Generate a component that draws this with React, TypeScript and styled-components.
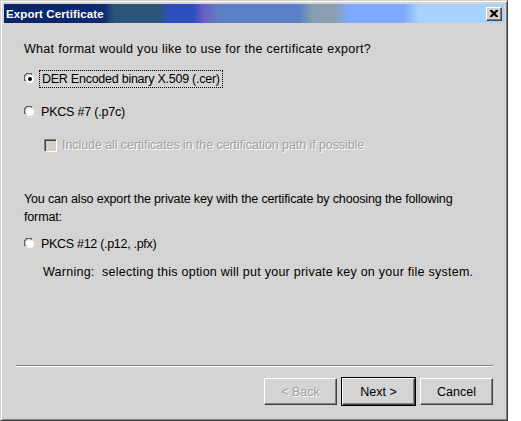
import React from "react";
import styled, { createGlobalStyle } from "styled-components";

const GlobalStyle = createGlobalStyle`
  html, body {
    margin: 0;
    padding: 0;
    background: #ffffff;
  }
  body {
    font-family: "Liberation Sans", Arial, sans-serif;
    font-size: 12.5px;
    color: #000;
  }
`;

const RadioIcon = ({ checked }: { checked?: boolean }) => (
  <svg width="12" height="12" viewBox="0 0 12 12">
    <path d="M0.5 8 A5.5 5.5 0 0 1 8 0.5" fill="none" stroke="#808080" />
    <path d="M1.5 8 A4.5 4.5 0 0 1 8 1.5" fill="none" stroke="#404040" />
    <circle cx="6" cy="6" r="4" fill="#fff" />
    <path d="M4 11.5 A5.5 5.5 0 0 0 11.5 4" fill="none" stroke="#fff" />
    <path d="M4 10.5 A4.5 4.5 0 0 0 10.5 4" fill="none" stroke="#d4d0c8" />
    {checked && <circle cx="6" cy="6" r="2" fill="#000" />}
  </svg>
);

const App = () => {
  return (
    <>
      <GlobalStyle />
      <Window>
        <TitleBar>
          <Title>Export Certificate</Title>
          <CloseButton>
            <svg width="8" height="7" viewBox="0 0 8 7">
              <path
                d="M0 0h2l2 2 2-2h2v1l-2.5 2.5L8 6v1H6L4 5 2 7H0V6l2.5-2.5L0 1z"
                fill="#000"
              />
            </svg>
          </CloseButton>
        </TitleBar>
        <Body>
          <Label $spacing={0.3}>What format would you like to use for the certificate export?</Label>
          <Option $top={14} $spacing={-0.25}>
            <RadioIcon checked />
            <Focused>DER Encoded binary X.509 (.cer)</Focused>
          </Option>
          <Option $top={15} $spacing={-0.2}>
            <RadioIcon />
            <span>PKCS #7 (.p7c)</span>
          </Option>
          <CheckRow>
            <CheckBox />
            <Disabled>Include all certificates in the certification path if possible</Disabled>
          </CheckRow>
          <Paragraph>
            You can also export the private key with the certificate by choosing the following
            <br />
            format:
          </Paragraph>
          <Option $top={9} $spacing={-0.3}>
            <RadioIcon />
            <span>PKCS #12 (.p12, .pfx)</span>
          </Option>
          <Warning>Warning:&nbsp; selecting this option will put your private key on your file system.</Warning>
        </Body>
        <Footer>
          <Separator />
          <ButtonRow>
            <Button disabled>
              <Disabled>&lt; Back</Disabled>
            </Button>
            <Button $default>Next &gt;</Button>
            <Button>Cancel</Button>
          </ButtonRow>
        </Footer>
      </Window>
    </>
  );
};

const Window = styled.div`
  box-sizing: border-box;
  width: 508px;
  height: 421px;
  display: flex;
  flex-direction: column;
  background: #d4d4d4;
  border-top: 1px solid #d4d0c8;
  border-left: 1px solid #d4d0c8;
  border-right: 1px solid #404040;
  border-bottom: 1px solid #404040;
  box-shadow: inset 1px 1px 0 #fff, inset -1px -1px 0 #808080;
  padding: 3px;
`;

const TitleBar = styled.div`
  height: 19px;
  display: flex;
  align-items: center;
  justify-content: space-between;
  padding: 0 2px;
  background: linear-gradient(
    to right,
    #0a246a 0px,
    #0c2a6e 100px,
    #2b5478 110px,
    #2b5478 155px,
    #2d4fc0 165px,
    #2d4fc0 190px,
    #6b5fc0 200px,
    #5b80c5 215px,
    #5b80c5 295px,
    #8aa0b0 310px,
    #8aa0b0 330px,
    #80a8ff 345px,
    #80a8ff 400px,
    #a9d3ff 415px,
    #a9d3ff 100%
  );
`;

const Title = styled.span`
  color: #fff;
  font-weight: bold;
  font-size: 11.5px;
  letter-spacing: 0.1px;
`;

const CloseButton = styled.div`
  box-sizing: border-box;
  width: 16px;
  height: 14px;
  display: flex;
  align-items: center;
  justify-content: center;
  background: #d4d0c8;
  border-top: 1px solid #fff;
  border-left: 1px solid #fff;
  border-right: 1px solid #404040;
  border-bottom: 1px solid #404040;
  box-shadow: inset -1px -1px 0 #808080;
`;

const Body = styled.div`
  flex: 1;
  display: flex;
  flex-direction: column;
  padding: 19px 0 0 20px;
`;

const Label = styled.div<{ $spacing?: number }>`
  line-height: 14px;
  letter-spacing: ${(p) => p.$spacing ?? 0}px;
`;

const Option = styled.div<{ $top: number; $spacing?: number }>`
  display: flex;
  align-items: center;
  gap: 5px;
  margin-top: ${(p) => p.$top}px;
  height: 18px;
  line-height: 14px;
  letter-spacing: ${(p) => p.$spacing ?? 0}px;
`;

const Focused = styled.span`
  outline: 1px dotted #000;
  outline-offset: 1px;
  padding: 0 1px;
`;

const CheckRow = styled.div`
  display: flex;
  align-items: center;
  gap: 5px;
  margin: 15px 0 0 20px;
  height: 18px;
  letter-spacing: -0.08px;
`;

const CheckBox = styled.div`
  box-sizing: border-box;
  width: 13px;
  height: 13px;
  background: #d4d0c8;
  border-top: 1px solid #808080;
  border-left: 1px solid #808080;
  border-right: 1px solid #fff;
  border-bottom: 1px solid #fff;
  box-shadow: inset 1px 1px 0 #404040, inset -1px -1px 0 #d4d0c8;
`;

const Disabled = styled.span`
  color: #a0a0a0;
  text-shadow: 1px 1px 0 #fff;
`;

const Paragraph = styled.div`
  margin-top: 36px;
  line-height: 18px;
  letter-spacing: -0.15px;
`;

const Warning = styled.div`
  margin: 12px 0 0 19px;
  line-height: 14px;
  letter-spacing: 0.25px;
`;

const Footer = styled.div`
  display: flex;
  flex-direction: column;
  padding: 0 11px 12px 12px;
`;

const Separator = styled.div`
  height: 1px;
  background: #808080;
  border-bottom: 1px solid #fff;
`;

const ButtonRow = styled.div`
  display: flex;
  justify-content: flex-end;
  gap: 5px;
  margin-top: 11px;
`;

const Button = styled.button<{ $default?: boolean }>`
  box-sizing: border-box;
  width: 73px;
  height: 27px;
  font-family: "Liberation Sans", Arial, sans-serif;
  font-size: 12.5px;
  color: #000;
  background: #d4d4d4;
  padding: 0;
  border-top: 1px solid #fff;
  border-left: 1px solid #fff;
  border-right: 1px solid #404040;
  border-bottom: 1px solid #404040;
  box-shadow: inset -1px -1px 0 #808080;
  outline: ${(p) => (p.$default ? "1px solid #000" : "none")};
  outline-offset: 0;
`;

export default App;
